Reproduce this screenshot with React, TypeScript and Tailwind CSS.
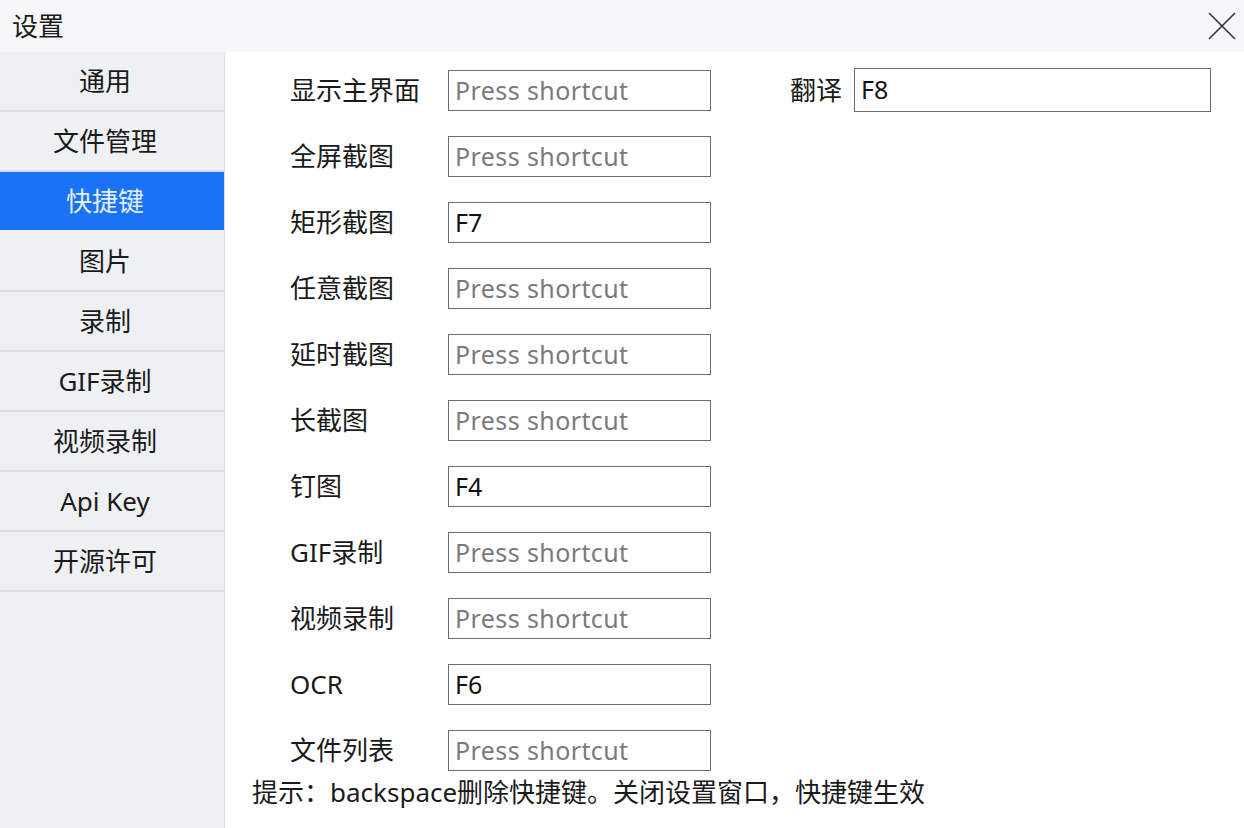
const menu = ['通用', '文件管理', '快捷键', '图片', '录制', 'GIF录制', '视频录制', 'Api Key', '开源许可']

const shortcuts = [
  { label: '显示主界面', value: '' },
  { label: '全屏截图', value: '' },
  { label: '矩形截图', value: 'F7' },
  { label: '任意截图', value: '' },
  { label: '延时截图', value: '' },
  { label: '长截图', value: '' },
  { label: '钉图', value: 'F4' },
  { label: 'GIF录制', value: '' },
  { label: '视频录制', value: '' },
  { label: 'OCR', value: 'F6' },
  { label: '文件列表', value: '' },
]

const font = "font-['Noto_Sans','Noto_Sans_CJK_SC',sans-serif]"

function ShortcutBox({ value, size }: { value: string; size: string }) {
  return (
    <div className={`${size} border border-[#6d6d6d] bg-white flex items-center pl-[6px]`}>
      {value ? (
        <span className="text-[25px] text-[#111]">{value}</span>
      ) : (
        <span className="text-[25px] text-[#7a7a7a] tracking-[0.4px]">Press shortcut</span>
      )}
    </div>
  )
}

export default function App() {
  return (
    <div className={`w-[1244px] h-[828px] bg-white flex flex-col overflow-hidden ${font}`}>
      {/* Title bar */}
      <div className="h-[52px] bg-[#f6f7f9] flex items-center justify-between pl-[12px] pr-[8px] shrink-0">
        <span className="text-[26px] text-[#1a1a1a] leading-none">设置</span>
        <svg width="28" height="28" viewBox="0 0 28 28" className="text-[#333]">
          <path d="M1 1L27 27M27 1L1 27" stroke="currentColor" strokeWidth="1.6" fill="none" />
        </svg>
      </div>

      <div className="flex flex-1 min-h-0">
        {/* Sidebar */}
        <div className="w-[225px] bg-[#eff0f4] border-r border-[#dcdde1] flex flex-col shrink-0">
          {menu.map((m) => (
            <div
              key={m}
              className={`h-[60px] flex items-center justify-center pr-[14px] text-[26px] border-b-2 ${
                m === '快捷键'
                  ? 'bg-[#1a72f4] text-[#e4eeff] border-[#eff0f4]'
                  : 'text-[#1a1a1a] border-[#dcdde1]'
              }`}
            >
              {m}
            </div>
          ))}
        </div>

        {/* Content */}
        <div className="flex-1 flex flex-col pl-[27px] pt-[18px]">
          <div className="flex">
            <div className="flex flex-col gap-[25px] pl-[38px]">
              {shortcuts.map((s) => (
                <div key={s.label} className="flex items-center">
                  <span className="w-[158px] text-[26px] text-[#1a1a1a]">{s.label}</span>
                  <ShortcutBox value={s.value} size="w-[263px] h-[41px]" />
                </div>
              ))}
            </div>
            <div className="flex items-center h-[44px] -mt-[2px] ml-[79px]">
              <span className="text-[26px] text-[#1a1a1a] mr-[12px]">翻译</span>
              <ShortcutBox value="F8" size="w-[357px] h-[44px]" />
            </div>
          </div>
          <div className="mt-[1px] text-[26px] text-[#1a1a1a] leading-[40px] whitespace-nowrap">
            提示：backspace删除快捷键。关闭设置窗口，快捷键生效
          </div>
        </div>
      </div>
    </div>
  )
}
